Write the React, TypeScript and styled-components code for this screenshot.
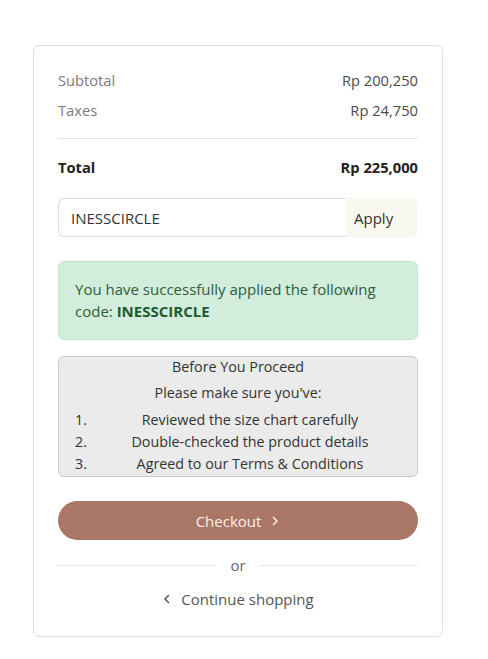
import React from "react";
import styled, { createGlobalStyle } from "styled-components";

const GlobalStyle = createGlobalStyle`
  html, body {
    margin: 0;
    padding: 0;
    background: #ffffff;
    font-family: "Open Sans", "Noto Sans", sans-serif;
    color: #333333;
  }
  * {
    box-sizing: border-box;
  }
`;

const Page = styled.div`
  padding: 45px 46px 23px 33px;
`;

const Card = styled.div`
  width: 410px;
  border: 1px solid #dedede;
  border-radius: 6px;
  padding: 19px 24px 27px;
  display: flex;
  flex-direction: column;
`;

const Row = styled.div<{ $bold?: boolean; $muted?: boolean }>`
  display: flex;
  justify-content: space-between;
  align-items: center;
  height: 30px;
  font-size: 14.7px;
  font-weight: ${(p) => (p.$bold ? 700 : 400)};
  color: ${(p) => (p.$muted ? "#7b7b7b" : p.$bold ? "#222222" : "#4a4a4a")};
`;

const Value = styled.span<{ $bold?: boolean }>`
  color: ${(p) => (p.$bold ? "#222222" : "#4a4a4a")};
`;

const Divider = styled.hr`
  border: none;
  border-top: 1px solid #e2e2e2;
  margin: 13px 0 13px;
`;

const CouponForm = styled.div`
  display: flex;
  height: 39px;
  margin-top: 16px;
`;

const CouponInput = styled.input`
  flex: 1;
  min-width: 0;
  border: 1px solid #dcdcdc;
  border-right: none;
  border-radius: 6px 0 0 6px;
  padding: 0 12px;
  font-family: inherit;
  font-size: 15px;
  color: #333333;
  outline: none;
`;

const ApplyButton = styled.button`
  width: 72px;
  border: none;
  border-radius: 0 6px 6px 0;
  background: #f8f8ee;
  font-family: inherit;
  font-size: 15px;
  color: #333333;
  text-align: left;
  padding: 0 8px;
`;

const SuccessAlert = styled.div`
  margin-top: 24px;
  background: #d2eddb;
  border: 1px solid #c3e6cb;
  border-radius: 6px;
  padding: 16px 16px 17px;
  font-size: 15px;
  line-height: 22px;
  color: #2e5e38;
`;

const Code = styled.strong`
  color: #1f5a2c;
  font-weight: 700;
`;

const NoticeBox = styled.div`
  margin-top: 16px;
  background: #ebebeb;
  border: 1px solid #c9c9c9;
  border-radius: 6px;
  padding: 0 0 1px;
  font-size: 14.3px;
  color: #333333;
  text-align: center;
`;

const NoticeTitle = styled.div`
  line-height: 20px;
`;

const NoticeSub = styled.div`
  line-height: 20px;
  margin-top: 6px;
`;

const NoticeList = styled.ol`
  list-style: none;
  margin: 6px 0 0;
  padding: 0 16px;
`;

const NoticeItem = styled.li`
  display: flex;
  line-height: 22px;
`;

const ItemNumber = styled.span`
  width: 24px;
  text-align: left;
`;

const ItemText = styled.span`
  flex: 1;
  text-align: center;
`;

const CheckoutButton = styled.button`
  margin-top: 24px;
  height: 39px;
  border: none;
  border-radius: 20px;
  background: #aa7766;
  color: #fbefe9;
  font-family: inherit;
  font-size: 15px;
  font-weight: 500;
  display: flex;
  align-items: center;
  justify-content: center;
  gap: 9px;
`;

const OrSeparator = styled.div`
  display: flex;
  align-items: center;
  gap: 14px;
  margin-top: 15px;
  font-size: 15px;
  color: #666666;

  &::before,
  &::after {
    content: "";
    flex: 1;
    border-top: 1px solid #e6e6e6;
  }
`;

const ContinueLink = styled.a`
  margin-top: 14px;
  display: flex;
  align-items: center;
  justify-content: center;
  gap: 9px;
  font-size: 15px;
  color: #555555;
  text-decoration: none;
`;

const Chevron = ({ dir }: { dir: "left" | "right" }) => (
  <svg width="10" height="10" viewBox="0 0 10 10" fill="none">
    <path
      d={dir === "right" ? "M3.5 1.5L7 5L3.5 8.5" : "M6.5 1.5L3 5L6.5 8.5"}
      stroke="currentColor"
      strokeWidth="1.5"
      strokeLinecap="round"
      strokeLinejoin="round"
    />
  </svg>
);

const checklist = [
  "Reviewed the size chart carefully",
  "Double-checked the product details",
  "Agreed to our Terms & Conditions",
];

export default function App() {
  return (
    <>
      <GlobalStyle />
      <Page>
        <Card>
          <Row $muted>
            <span>Subtotal</span>
            <Value>Rp 200,250</Value>
          </Row>
          <Row $muted>
            <span>Taxes</span>
            <Value>Rp 24,750</Value>
          </Row>
          <Divider />
          <Row $bold>
            <span>Total</span>
            <Value $bold>Rp 225,000</Value>
          </Row>
          <CouponForm>
            <CouponInput defaultValue="INESSCIRCLE" />
            <ApplyButton>Apply</ApplyButton>
          </CouponForm>
          <SuccessAlert>
            You have successfully applied the following code:{" "}
            <Code>INESSCIRCLE</Code>
          </SuccessAlert>
          <NoticeBox>
            <NoticeTitle>Before You Proceed</NoticeTitle>
            <NoticeSub>Please make sure you've:</NoticeSub>
            <NoticeList>
              {checklist.map((item, i) => (
                <NoticeItem key={item}>
                  <ItemNumber>{i + 1}.</ItemNumber>
                  <ItemText>{item}</ItemText>
                </NoticeItem>
              ))}
            </NoticeList>
          </NoticeBox>
          <CheckoutButton>
            Checkout <Chevron dir="right" />
          </CheckoutButton>
          <OrSeparator>or</OrSeparator>
          <ContinueLink href="#">
            <Chevron dir="left" />
            Continue shopping
          </ContinueLink>
        </Card>
      </Page>
    </>
  );
}
